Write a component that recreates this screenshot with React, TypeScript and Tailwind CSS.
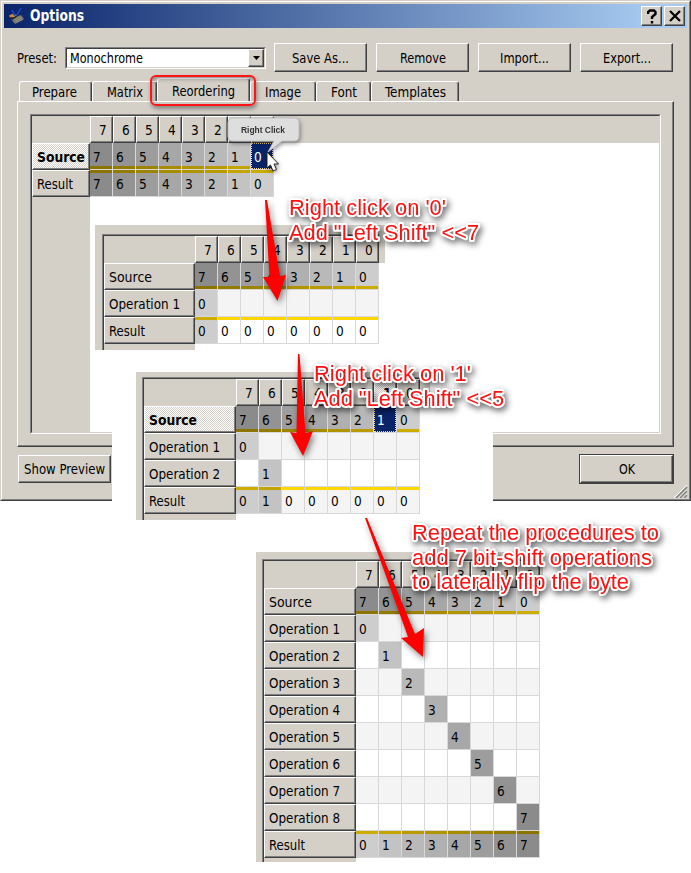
import React from "react";

const COLS = [7, 6, 5, 4, 3, 2, 1, 0];
const SHADES = ["#cdcdcd", "#c3c3c3", "#b9b9b9", "#b0b0b0", "#a7a7a7", "#9d9d9d", "#939393", "#8b8b8b"];
const GOLDS = ["#cdac00", "#c3a400", "#b99b00", "#b09400", "#a78c00", "#9d8400", "#937b00", "#8b7500"];
const RAISED = "border border-t-white border-l-white border-r-[#404040] border-b-[#404040] shadow-[inset_-1px_-1px_#808080]";
const DITHER = "bg-[repeating-conic-gradient(#ffffff_0_25%,#d4d0c8_0_50%)] bg-[size:2px_2px]";

type Row = {
  label: string;
  cells: (number | null)[];
  kind: "source" | "op" | "result";
  shadedCols?: number;
  bold?: boolean;
  alt?: boolean;
  selected?: number;
};

function Text({ w, children, className = "" }: { w: number; children: string; className?: string }) {
  return (
    <svg width={w} height="18" className={"block shrink-0 overflow-visible " + className}>
      <text x="0" y="14" textLength={w} lengthAdjust="spacingAndGlyphs" fill="currentColor">
        {children}
      </text>
    </svg>
  );
}

function labelWidth(r: Row) {
  if (r.kind === "op") return 71;
  if (r.kind === "source") return r.bold ? 48 : 43;
  return 36;
}

function Grid({ rows, head, hot }: { rows: Row[]; head: string; hot?: number }) {
  return (
    <div className="leading-[27px]">
      <div className="flex h-[27px]">
        <div className={head + " shrink-0"} />
        {COLS.map((c) => (
          <div key={c} className={`h-[27px] w-[23px] pl-[8px] leading-[27px] ${RAISED} ${hot === c ? DITHER + " font-bold" : "bg-[#d4d0c8]"}`}>
            {c}
          </div>
        ))}
      </div>
      {rows.map((r) => (
        <div key={r.label} className="flex h-[27px]">
          <div className={`${head} shrink-0 whitespace-nowrap pl-1 ${RAISED} ${r.bold ? DITHER + " font-bold" : "bg-[#d4d0c8]"}`}>
            <Text w={labelWidth(r)} className="mt-[4px]">
              {r.label}
            </Text>
          </div>
          {r.cells.map((v, i) => {
            const sel = r.kind === "source" && r.selected === v;
            const shaded = v !== null && i < (r.shadedCols ?? 8);
            const bg = shaded ? SHADES[v as number] : r.alt ? "#f4f4f4" : "#ffffff";
            const gold = shaded ? GOLDS[v as number] : "#ffd700";
            return (
              <div
                key={i}
                className={`relative h-[27px] w-[23px] border-r border-b border-[#d8d8d8] pl-[3px] leading-[29px] ${sel ? "text-white" : ""}`}
                style={{ background: sel ? "#0a246a" : bg }}
              >
                {v}
                {sel && <span className="absolute inset-0 border border-dotted border-[#f5db95]" />}
                {r.kind !== "op" && !sel && (
                  <span className={`absolute left-0 h-[3px] w-[22px] ${r.kind === "source" ? "bottom-0" : "top-0"}`} style={{ background: gold }} />
                )}
              </div>
            );
          })}
        </div>
      ))}
    </div>
  );
}

function Snippet({ rows, head, hot, place, top, frame }: { rows: Row[]; head: string; hot?: number; place: string; top: string; frame: string }) {
  return (
    <div className={`absolute ${place}`}>
      <div className={`absolute top-0 left-0 bg-[#d4d0c8] ${top}`} />
      <div className="absolute top-0 left-0 h-full w-[100px] bg-[#d4d0c8]" />
      <div className={`relative h-full ${frame}`}>
        <div className="h-full border-t border-l border-[#808080]">
          <div className="h-full border-t border-l border-[#404040]">
            <Grid rows={rows} head={head} hot={hot} />
          </div>
        </div>
      </div>
    </div>
  );
}

const source = (extra: Partial<Row> = {}): Row => ({ label: "Source", cells: COLS, kind: "source", ...extra });
const op = (n: number): Row => ({
  label: `Operation ${n}`,
  cells: COLS.map((_, i) => (i === n - 1 ? n - 1 : null)),
  kind: "op",
  alt: n % 2 === 1,
});

function Button({ children, w, className = "" }: { children: string; w: number; className?: string }) {
  return (
    <button className={`flex items-center justify-center bg-[#d4d0c8] ${RAISED} ${className}`}>
      <Text w={w}>{children}</Text>
    </button>
  );
}

function Tab({ label, w, className, active }: { label: string; w: number; className: string; active?: boolean }) {
  return (
    <div
      className={`flex justify-center rounded-t-[3px] border-t border-l border-r border-t-white border-l-white border-r-[#404040] bg-[#d4d0c8] shadow-[inset_-1px_0_#808080] ${active ? "relative h-[23px] pt-[3px]" : "h-[20px] pt-[1px]"} ${className}`}
    >
      <Text w={w}>{label}</Text>
    </div>
  );
}

function Note({ lines, place }: { lines: [string, number][]; place: string }) {
  return (
    <svg className={`absolute overflow-visible ${place}`} width="270" height="76">
      <g className="[filter:drop-shadow(2px_3px_3px_rgba(0,0,0,0.6))]">
        {lines.map(([t, w], i) => (
          <text
            key={t}
            x="0"
            y={20 + i * 24.5}
            textLength={w}
            lengthAdjust="spacingAndGlyphs"
            className="fill-[#ff1010] stroke-white stroke-[4px] font-['Liberation_Sans',Arial,sans-serif] text-[21.5px] [paint-order:stroke] [stroke-linejoin:round]"
          >
            {t}
          </text>
        ))}
      </g>
    </svg>
  );
}

export default function App() {
  return (
    <div className="relative h-[873px] w-[691px] overflow-hidden bg-white font-['DejaVu_Sans_Condensed','DejaVu_Sans',sans-serif] text-[13.5px] text-black [font-stretch:condensed]">
      <div className="h-[501px] border border-[#d4d0c8] border-r-[#404040] border-b-[#404040] bg-[#d4d0c8]">
        <div className="h-full border border-white border-r-[#808080] border-b-[#808080] px-[2px] pt-[2px]">
          <div className="flex h-[24px] items-center bg-linear-to-r/srgb from-[#0a246a] to-[#a6caf0] to-95% pr-[2px] pl-[4px]">
            <svg width="18" height="18" viewBox="0 0 18 18">
              <path d="M3 12L13 8L16 12L7 17Z" fill="#77776f" />
              <path d="M6 12l7-2M7 14l7-2.500M8 15.500l7-3" stroke="#a3a294" strokeWidth=".6" />
              <path d="M1 8.500L4 7L9 8L6 10.500H2Z" fill="#c98a3c" />
              <path d="M2 10.500H6L8 9L9 10L4 13Z" fill="#1c2226" />
              <path d="M7 9L4 3M9 8L13 1" stroke="#2446c8" strokeWidth="1.5" />
            </svg>
            <span className="ml-[4px] font-bold text-white">
              <Text w={54} className="text-[15px]">Options</Text>
            </span>
            <div className="ml-auto flex gap-[2px]">
              <div className={`flex h-[20px] w-[21px] items-center justify-center bg-[#d4d0c8] ${RAISED}`}>
                <svg width="10" height="15" viewBox="0 0 10 15" fill="none" stroke="black" strokeWidth="2.4">
                  <path d="M1 5V3L3 1.5H7L8.5 3V5L5 8V10M5 12V14.5" />
                </svg>
              </div>
              <div className={`flex h-[20px] w-[21px] items-center justify-center bg-[#d4d0c8] ${RAISED}`}>
                <svg width="12" height="12" viewBox="0 0 12 12" stroke="black" strokeWidth="2.2">
                  <path d="M1 1L11 11M11 1L1 11" />
                </svg>
              </div>
            </div>
          </div>

          <div className="mt-[15px] flex h-[29px] items-center pl-[13px]">
            <Text w={40}>Preset:</Text>
            <div className="ml-[8px] h-[22px] w-[201px] border border-[#808080] border-r-white border-b-white">
              <div className="flex h-full items-center border border-[#404040] border-r-[#d4d0c8] border-b-[#d4d0c8] bg-white pl-[3px]">
                <Text w={73}>Monochrome</Text>
                <div className={`ml-auto flex h-[18px] w-[16px] items-center justify-center bg-[#d4d0c8] ${RAISED}`}>
                  <svg width="7" height="4" viewBox="0 0 7 4">
                    <path d="M0 0H7L3.5 4Z" />
                  </svg>
                </div>
              </div>
            </div>
            <div className="ml-[8px] flex gap-[9px]">
              <Button w={57} className="h-[29px] w-[93px]">Save As...</Button>
              <Button w={46} className="h-[29px] w-[93px]">Remove</Button>
              <Button w={49} className="h-[29px] w-[93px]">Import...</Button>
              <Button w={48} className="h-[29px] w-[93px]">Export...</Button>
            </div>
          </div>

          <div className="mt-[7px] flex h-[22px] items-end pl-[15px]">
            <Tab label="Prepare" w={45} className="w-[73px] pr-[2px]" />
            <Tab label="Matrix" w={36} className="w-[65px]" />
            <Tab label="Reordering" w={63} className="z-10 w-[93px]" active />
            <Tab label="Image" w={36} className="w-[66px]" />
            <Tab label="Font" w={26} className="w-[55px]" />
            <Tab label="Templates" w={61} className="w-[88px]" />
          </div>

          <div className={`ml-[13px] h-[346px] w-[657px] px-[12px] pt-[12px] ${RAISED}`}>
            <div className="h-[320px] w-[631px] border border-[#808080] border-r-white border-b-white">
              <div className="h-full border border-[#404040] border-r-[#d4d0c8] border-b-[#d4d0c8] bg-[linear-gradient(90deg,#d4d0c8_58px,transparent_58px),linear-gradient(#d4d0c8_27px,white_27px)]">
                <Grid
                  head="w-[58px]"
                  rows={[source({ bold: true, selected: 0 }), { label: "Result", cells: COLS, kind: "result" }]}
                />
              </div>
            </div>
          </div>

          <div className="mt-[7px] flex items-center justify-between pr-[13px] pl-[14px]">
            <Button w={81} className="h-[28px] w-[93px]">Show Preview</Button>
            <div className="border border-[#404040]">
              <Button w={16} className="h-[28px] w-[93px]">OK</Button>
            </div>
          </div>
        </div>
      </div>

      <svg className="absolute top-[485px] left-[674px]" width="14" height="13">
        <path d="M0 13L13 0M5 13L13 5M9 13L13 9" stroke="white" />
        <path d="M2 13L13 2M6 13L13 6M10 13L13 10" stroke="#808080" strokeWidth="1.5" />
      </svg>

      <div className="absolute top-[432px] left-[112px] h-[69px] w-[381px] bg-white" />

      <Snippet
        place="top-[225px] left-[95px] h-[125px]"
        frame="ml-[7px] pt-[9px]"
        top="h-[38px] w-[290px]"
        head="w-[91px]"
        rows={[source(), op(1), { label: "Result", cells: [0, 0, 0, 0, 0, 0, 0, 0], kind: "result", shadedCols: 1 }]}
      />
      <Snippet
        place="top-[372px] left-[136px] h-[148px]"
        frame="ml-[6px] pt-[5px]"
        top="h-[34px] w-[294px]"
        head="w-[92px]"
        hot={1}
        rows={[
          source({ bold: true, selected: 1 }),
          op(1),
          op(2),
          { label: "Result", cells: [0, 1, 0, 0, 0, 0, 0, 0], kind: "result", shadedCols: 2, alt: true },
        ]}
      />
      <Snippet
        place="top-[552px] left-[256px] h-[310px]"
        frame="ml-[6px] pt-[7px]"
        top="h-[36px] w-[287px]"
        head="w-[92px]"
        rows={[
          source(),
          ...[1, 2, 3, 4, 5, 6, 7, 8].map(op),
          { label: "Result", cells: [0, 1, 2, 3, 4, 5, 6, 7], kind: "result" },
        ]}
      />

      <div className="absolute top-[75px] left-[150px] z-20 h-[31px] w-[106px] rounded-[6px] border-2 border-[#ff1515] shadow-[1px_3px_4px_rgba(0,0,0,0.35),inset_1px_2px_4px_rgba(0,0,0,0.3)]" />

      <svg className="absolute top-0 left-0" width="691" height="873">
        <g className="[filter:drop-shadow(2px_3px_3px_rgba(0,0,0,0.5))]">
          <path d="M265 200L267 200L280 276L286 275L277.500 301L263 277L269.500 277Z" fill="red" />
          <path d="M298 354L299.500 354L305.500 433L313 431L303 456L290 432L296.500 433Z" fill="red" />
          <path d="M365 518L367 518L415 634L424 628L423 657L401 638L408 637Z" fill="red" />
        </g>
        <g className="[filter:drop-shadow(1px_2px_2px_rgba(0,0,0,0.4))]">
          <path d="M233 118H294Q299 118 299 123V136Q299 141 294 141H282L268 152L274 141H233Q228 141 228 136V123Q228 118 233 118Z" fill="#dedede" stroke="#c1c1c1" />
          <text x="241" y="132.500" textLength="44" lengthAdjust="spacingAndGlyphs" fill="#333" className="font-['Liberation_Sans',Arial,sans-serif] text-[9px] font-bold">
            Right Click
          </text>
          <path d="M267 152V168L270.500 165L273 171L276.500 169.500L274 164H278.500Z" fill="white" stroke="#222" />
        </g>
      </svg>

      <Note place="top-[195px] left-[289px]" lines={[["Right click on '0'", 157], ["Add \"Left Shift\" <<7", 190]]} />
      <Note place="top-[361px] left-[314px]" lines={[["Right click on '1'", 157], ["Add \"Left Shift\" <<5", 190]]} />
      <Note place="top-[520px] left-[412px]" lines={[["Repeat the procedures to", 247], ["add 7 bit-shift operations", 240], ["to laterally flip the byte", 217]]} />
    </div>
  );
}
